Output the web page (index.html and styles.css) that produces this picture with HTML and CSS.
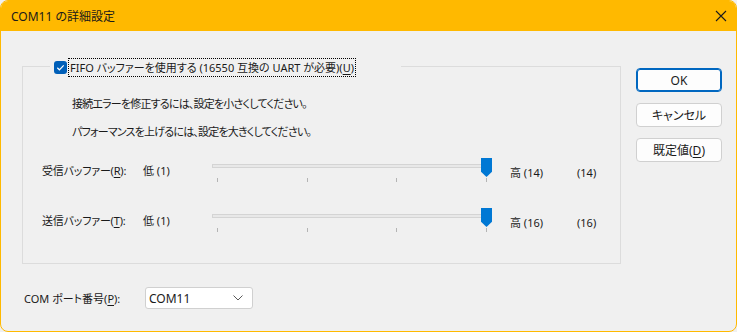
FILE: index.html
```html
<!DOCTYPE html>
<html lang="ja">
<head>
<meta charset="utf-8">
<link rel="stylesheet" href="styles.css">
</head>
<body>
<div class="window">
  <div class="titlebar">
    <span class="title">COM11 の詳細設定</span>
    <svg class="close" width="12" height="12" viewBox="0 0 12 12"><path d="M1 1 L11 11 M11 1 L1 11" stroke="#1b1b1b" stroke-width="1.1" fill="none"/></svg>
  </div>
  <div class="body">
    <div class="main">
      <div class="group">
        <div class="legend">
          <span class="checkbox"><svg width="13" height="13" viewBox="0 0 13 13"><path d="M3.3 6.8 L5.4 8.8 L9.7 4.4" stroke="#fff" stroke-width="1.2" fill="none"/></svg></span>
          <span class="focus">FIFO バッファーを使用する (16550 互換の UART が必要)(<u>U</u>)</span>
        </div>
        <p class="hint first">接続エラーを修正するには、設定を小さくしてください。</p>
        <p class="hint">パフォーマンスを上げるには、設定を大きくしてください。</p>
        <div class="row r1">
          <span class="lbl">受信バッファー(<u>R</u>):</span>
          <span class="low">低 (1)</span>
          <div class="slider">
            <div class="track"></div>
            <div class="thumb"></div>
            <div class="ticks"><i></i><i></i><i></i><i></i></div>
          </div>
          <span class="high">高 (14)</span>
          <span class="val">(14)</span>
        </div>
        <div class="row r2">
          <span class="lbl">送信バッファー(<u>T</u>):</span>
          <span class="low">低 (1)</span>
          <div class="slider">
            <div class="track"></div>
            <div class="thumb"></div>
            <div class="ticks"><i></i><i></i><i></i><i></i></div>
          </div>
          <span class="high">高 (16)</span>
          <span class="val">(16)</span>
        </div>
      </div>
      <div class="comrow">
        <span class="comlbl">COM ポート番号(<u>P</u>):</span>
        <div class="select">
          <span>COM11</span>
          <svg width="10" height="6" viewBox="0 0 10 6"><path d="M0.5 0.5 L5 5 L9.5 0.5" stroke="#5a5a5a" stroke-width="1" fill="none"/></svg>
        </div>
      </div>
    </div>
    <div class="side">
      <button class="btn primary">OK</button>
      <button class="btn">キャンセル</button>
      <button class="btn">既定値(<u>D</u>)</button>
    </div>
  </div>
</div>
</body>
</html>
```
FILE: styles.css
```css
* { box-sizing: border-box; }
html, body { margin: 0; padding: 0; background: #f0f0f0; }
body {
  font-family: "Noto Sans", "Noto Sans CJK JP", sans-serif;
  font-size: 11px;
  font-feature-settings: "palt";
  color: #1a1a1a;
}
u { text-decoration: underline; text-underline-offset: 2px; }
.window {
  width: 737px;
  height: 332px;
  border: 1px solid #ffb900;
  border-radius: 8px;
  overflow: hidden;
  background: #f0f0f0;
  display: flex;
  flex-direction: column;
}
.titlebar {
  height: 30px;
  flex: none;
  background: #ffb900;
  display: flex;
  align-items: center;
  justify-content: space-between;
  padding: 0 9px 0 10px;
}
.title { font-size: 12px; color: #1a1a1a; }
.close { display: block; }
.body { display: flex; flex: 1; }
.main { padding: 35px 0 0 21px; width: 620px; }
.group {
  border: 1px solid #dcdcdc;
  width: 599px;
  height: 198px;
}
.legend {
  display: flex;
  align-items: center;
  height: 20px;
  width: 351px;
  margin: -10px 0 0 27px;
  padding-left: 4px;
  background: #f0f0f0;
}
.checkbox {
  width: 13px;
  height: 13px;
  border-radius: 3px;
  background: #005fb8;
  display: flex;
  flex: none;
}
.focus {
  margin-left: 2px;
  padding: 0 1px;
  outline: 1px dotted #000;
  outline-offset: 0;
  line-height: 17px;
  white-space: nowrap;
}
.hint { margin: 12px 0 0 49px; line-height: 16px; white-space: nowrap; letter-spacing: -0.8px; }
.hint.first { margin-top: 19px; }
.row {
  display: flex;
  align-items: center;
  height: 24px;
  padding-left: 19px;
  margin-top: 18px;
  white-space: nowrap;
}
.row.r2 { margin-top: 26px; }
.lbl { width: 101px; flex: none; letter-spacing: -0.2px; }
.low { width: 69px; flex: none; }
.high { width: 67px; flex: none; padding-top: 4px; margin-left: 16px; }
.val { padding-top: 4px; }
.slider { position: relative; width: 282px; height: 24px; flex: none; }
.track {
  position: absolute;
  left: 0; top: 6px;
  width: 276px; height: 4px;
  background: #e8e8e8;
  border: 1px solid #d4d4d4;
}
.thumb {
  position: absolute;
  left: 269px; top: 0;
  width: 11px; height: 19px;
  background: #0078d4;
  clip-path: polygon(0 0, 100% 0, 100% 72%, 50% 100%, 0 72%);
}
.ticks {
  position: absolute;
  left: 5px; top: 20px;
  width: 270px; height: 4px;
  display: flex;
  justify-content: space-between;
}
.ticks i { display: block; width: 1px; height: 4px; background: #b4b4b4; }
.comrow {
  display: flex;
  align-items: center;
  margin-top: 23px;
  padding-left: 2px;
  white-space: nowrap;
}
.comlbl { width: 121px; flex: none; }
.select {
  width: 108px;
  height: 22px;
  background: #fff;
  border: 1px solid #d0d0d0;
  border-radius: 3px;
  display: flex;
  align-items: center;
  justify-content: space-between;
  padding: 0 9px 0 3px;
  font-size: 12px;
}
.side {
  padding: 37px 0 0 15px;
  display: flex;
  flex-direction: column;
  gap: 11px;
}
.btn {
  width: 86px;
  height: 24px;
  font: inherit;
  font-size: 12px;
  color: #1a1a1a;
  background: #fdfdfd;
  border: 1px solid #d0d0d0;
  border-radius: 4px;
  padding: 0;
}
.btn.primary { border: 1px solid #0067c0; box-shadow: inset 0 0 0 1px #0067c0; }
```
